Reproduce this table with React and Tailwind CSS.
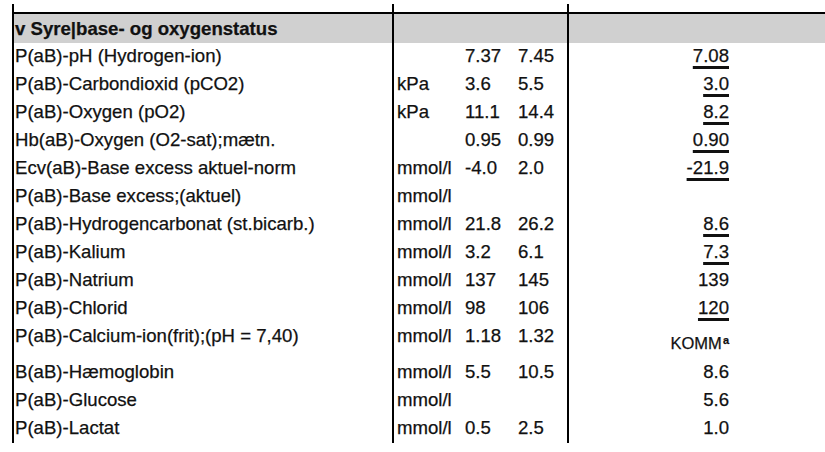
import clsx from "clsx";

const rows = [
  { label: "P(aB)-pH (Hydrogen-ion)", unit: "", lo: "7.37", hi: "7.45", res: "7.08", flag: true },
  { label: "P(aB)-Carbondioxid (pCO2)", unit: "kPa", lo: "3.6", hi: "5.5", res: "3.0", flag: true },
  { label: "P(aB)-Oxygen (pO2)", unit: "kPa", lo: "11.1", hi: "14.4", res: "8.2", flag: true },
  { label: "Hb(aB)-Oxygen (O2-sat);mætn.", unit: "", lo: "0.95", hi: "0.99", res: "0.90", flag: true },
  { label: "Ecv(aB)-Base excess aktuel-norm", unit: "mmol/l", lo: "-4.0", hi: "2.0", res: "-21.9", flag: true },
  { label: "P(aB)-Base excess;(aktuel)", unit: "mmol/l", lo: "", hi: "", res: "" },
  { label: "P(aB)-Hydrogencarbonat (st.bicarb.)", unit: "mmol/l", lo: "21.8", hi: "26.2", res: "8.6", flag: true },
  { label: "P(aB)-Kalium", unit: "mmol/l", lo: "3.2", hi: "6.1", res: "7.3", flag: true },
  { label: "P(aB)-Natrium", unit: "mmol/l", lo: "137", hi: "145", res: "139" },
  { label: "P(aB)-Chlorid", unit: "mmol/l", lo: "98", hi: "106", res: "120", flag: true },
  { label: "P(aB)-Calcium-ion(frit);(pH = 7,40)", unit: "mmol/l", lo: "1.18", hi: "1.32", komm: true },
  { label: "B(aB)-Hæmoglobin", unit: "mmol/l", lo: "5.5", hi: "10.5", res: "8.6" },
  { label: "P(aB)-Glucose", unit: "mmol/l", lo: "", hi: "", res: "5.6" },
  { label: "P(aB)-Lactat", unit: "mmol/l", lo: "0.5", hi: "2.5", res: "1.0" },
];

function Row({ r }) {
  return (
    <div className={clsx("grid grid-cols-[380px_175px_240px]", r.komm ? "h-[36px]" : "h-[28px]")}>
      <div className="border-l-2 border-black pl-[1px] leading-[26px] whitespace-nowrap">{r.label}</div>
      <div className="border-l-2 border-black flex leading-[26px] whitespace-nowrap">
        <span className="w-[71px] pl-[3px]">{r.unit}</span>
        <span className="w-[53px]">{r.lo}</span>
        <span>{r.hi}</span>
      </div>
      <div className="border-l-2 border-black flex justify-end pr-[78px] leading-[26px]">
        {r.komm ? (
          <span className="pt-[7px] text-[16.5px] whitespace-nowrap">
            KOMM<sup className="text-[11px] font-bold ml-[1px]">a</sup>
          </span>
        ) : (
          <span className={clsx(r.flag && "underline decoration-[3px] underline-offset-[4px]")}>{r.res}</span>
        )}
      </div>
    </div>
  );
}

export default function App() {
  return (
    <div className="w-[825px] h-[452px] bg-white pt-[4px] pl-[12px] text-[18.6px] text-[#111] [-webkit-text-stroke:0.25px_#111] font-['Liberation_Sans',Arial,sans-serif] overflow-hidden">
      {/* stubs of the column lines above the header */}
      <div className="grid grid-cols-[380px_175px_240px] h-[8px]">
        <div className="border-l-2 border-black" />
        <div className="border-l-2 border-black" />
        <div className="border-l-2 border-black" />
      </div>

      {/* section header */}
      <div className="grid grid-cols-[380px_175px_240px] h-[31px] border-t-2 border-black bg-[#d0d0d0]">
        <div className="border-l-2 border-black pl-[1px] font-bold leading-[29px] whitespace-nowrap">
          v Syre|base- og oxygenstatus
        </div>
        <div className="border-l-2 border-black" />
        <div className="border-l-2 border-black" />
      </div>

      {rows.map((r) => (
        <Row key={r.label} r={r} />
      ))}
    </div>
  );
}
